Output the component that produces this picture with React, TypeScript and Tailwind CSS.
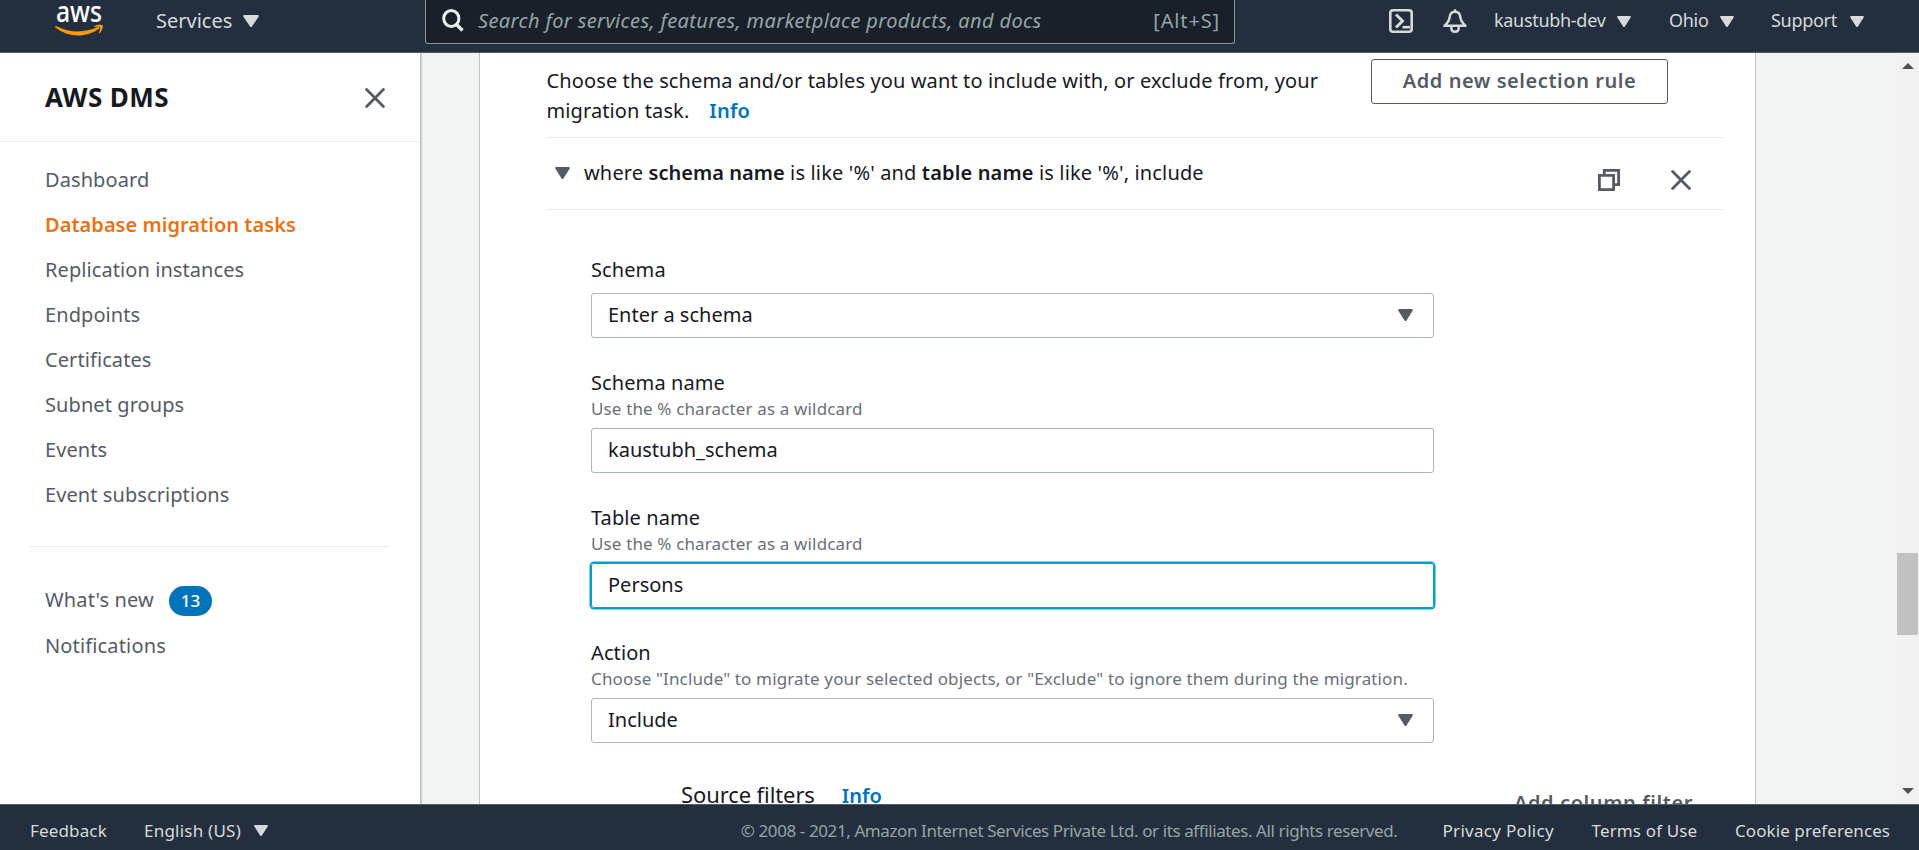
import type { ReactNode } from "react";

function Caret({ className }: { className: string }) {
  return (
    <svg viewBox="0 0 16 12" preserveAspectRatio="none" className={`block shrink-0 ${className}`} fill="currentColor">
      <path d="M1.400 0h13.200c1 0 1.500.9 1 1.700L9 11.400Q8 12.600 7 11.400L.4 1.700C-.1.900.4 0 1.400 0z" />
    </svg>
  );
}

function Cross({ className }: { className: string }) {
  return (
    <svg viewBox="0 0 20 20" className={`block shrink-0 ${className}`} fill="none" stroke="#545b64" strokeWidth="2.800" strokeLinecap="round">
      <path d="M1.600 1.600l16.800 16.800M18.400 1.600L1.600 18.400" />
    </svg>
  );
}

function Logo() {
  return (
    <svg viewBox="0 0 50 36" className="ml-[54px] block h-9 w-[50px] shrink-0 overflow-visible">
      <text x="2" y="21.500" textLength="46" lengthAdjust="spacingAndGlyphs" fill="#fff" fontFamily="Noto Sans, sans-serif" fontSize="28" fontWeight="500">
        aws
      </text>
      <path d="M1.200 31.200c.3-.5.8-.5 1.400-.2 13.400 7 27.600 6.800 41.200.9 1.400-.5 2.200.8 1 1.600C32.500 43 13.500 42.300 1.500 32.300c-.4-.4-.6-.8-.3-1.100z" transform="translate(0 -4.800)" fill="#f90" />
      <path d="M40.300 26.300c3-2.100 7-1.800 8.200-1.200 1 .8-.2 6-2.900 8.200-.6.400-.9.100-.7-.5.800-2 1.700-5 1.300-5.600-.6-.7-3.500-.4-5.400-.2-.7 0-.9-.400-.5-.7z" fill="#f90" />
    </svg>
  );
}

function TopBar() {
  return (
    <header className="flex h-[53px] shrink-0 items-start border-b border-[#545b64] bg-[#232f3e] text-[#d5dbdb]">
      <Logo />
      <button className="ml-[52px] flex h-[41px] items-center text-[20px] leading-[41px]">
        <span className="w-[87px] text-left">Services</span>
        <Caret className="h-3 w-4" />
      </button>
      <div className="ml-[166px] flex h-11 w-[810px] items-center rounded-b-[3px] border border-t-0 border-[#879596] bg-[#1a202a] pb-[2px] text-[20px] text-[#95a5a6]">
        <svg viewBox="0 0 22 23" className="ml-4 block h-[23px] w-[22px] text-[#eaeded]" fill="none" stroke="currentColor" strokeWidth="3">
          <ellipse cx="9.300" cy="9.500" rx="7.600" ry="8" />
          <path d="M14.500 15.500l6 6" strokeWidth="3.400" />
        </svg>
        <span className="ml-[14px] flex-1 whitespace-nowrap italic tracking-[0.370px]">
          Search for services, features, marketplace products, and docs
        </span>
        <span className="mr-[14px] tracking-[0.850px]">[Alt+S]</span>
      </div>
      <div className="flex h-[41px] flex-1 items-center text-[18px] whitespace-nowrap">
        <svg viewBox="0 0 24 24" className="ml-[154px] block size-6 shrink-0" fill="none" stroke="currentColor" strokeWidth="2.600">
          <rect x="1.300" y="1.300" width="21.400" height="21.400" rx="2.800" />
          <path d="M7 5.500l6.500 6.500L7 18.500" strokeWidth="3" />
          <path d="M13.500 18.200h7.500" />
        </svg>
        <svg viewBox="0 0 24 24" className="ml-[30px] block size-6 shrink-0" fill="none" stroke="currentColor" strokeWidth="2.400" strokeLinejoin="round">
          <path d="M12 .3v2.500" />
          <path d="M12 2.800c-3.600 0-5 2.600-5.300 5.200C6.300 11.500 5 13.800 1.400 16.800h21.200C19 13.800 17.700 11.500 17.300 8 17 5.400 15.600 2.800 12 2.800z" />
          <path d="M8.300 17.500v1.700c0 2.200 1.500 3.500 3.700 3.500s3.700-1.300 3.700-3.500v-1.700" />
        </svg>
        <button className="ml-[27px] flex items-center">
          <span className="w-[123px] text-left tracking-[-0.3px]">kaustubh-dev</span>
          <Caret className="mt-px h-[11px] w-[14px]" />
        </button>
        <button className="ml-[38px] flex items-center">
          <span className="w-[51px] text-left tracking-[-0.3px]">Ohio</span>
          <Caret className="mt-px h-[11px] w-[14px]" />
        </button>
        <button className="ml-[37px] flex items-center">
          <span className="w-[79px] text-left tracking-[-0.3px]">Support</span>
          <Caret className="mt-px h-[11px] w-[14px]" />
        </button>
      </div>
    </header>
  );
}

const links = [
  "Dashboard",
  "Database migration tasks",
  "Replication instances",
  "Endpoints",
  "Certificates",
  "Subnet groups",
  "Events",
  "Event subscriptions",
];

function Sidebar() {
  return (
    <aside className="z-10 w-[421px] shrink-0 border-r border-[#bfc5c8] bg-white shadow-[1px_0_1px_rgba(0,28,36,0.15)]">
      <div className="flex h-[89px] items-center justify-between border-b border-[#eaeded] pt-px pr-[35px] pl-[45px]">
        <h2 className="text-[26px] font-bold tracking-[0.4px] text-[#16191f]">AWS DMS</h2>
        <Cross className="size-5" />
      </div>
      <ul className="px-[45px] pt-[15px] text-[20px] leading-[45px] text-[#545b64]">
        {links.map((label) => (
          <li
            key={label}
            className={label === "Database migration tasks" ? "font-semibold tracking-[0.040px] text-[#ec7211]" : "tracking-[0.080px]"}
          >
            {label}
          </li>
        ))}
      </ul>
      <hr className="mx-[30px] mt-[29px] border-[#eaeded]" />
      <ul className="px-[45px] pt-[30px] text-[20px] leading-[45px] tracking-[0.150px] text-[#545b64]">
        <li className="flex h-[46px] items-center">
          <span className="mb-px w-[124px]">What's new</span>
          <span className="mt-px flex h-[30px] w-[43px] items-center justify-center rounded-full bg-[#0073bb] text-[17px] leading-none font-medium text-white">
            13
          </span>
        </li>
        <li>Notifications</li>
      </ul>
    </aside>
  );
}

function Field({ label, hint, children }: { label: string; hint?: string; children: ReactNode }) {
  return (
    <div className="mb-[30px] w-[843px]">
      <div className="h-[29px] text-[20px] leading-[29px] tracking-[0.100px]">{label}</div>
      {hint ? (
        <div className="mb-[7px] h-6 text-[17px] leading-6 tracking-[0.140px] whitespace-nowrap text-[#687078]">{hint}</div>
      ) : (
        <div className="h-[9px]" />
      )}
      {children}
    </div>
  );
}

function Box({ value, select, focused }: { value: string; select?: boolean; focused?: boolean }) {
  return (
    <div
      className={`flex h-[45px] items-center justify-between rounded-[3px] border pr-5 pb-px pl-[16px] text-[20px] ${
        focused ? "border-[#00a1c9] shadow-[0_0_0_1.500px_#00a1c9]" : "border-[#aab7b8]"
      }`}
    >
      <span>{value}</span>
      {select && <Caret className="h-3 w-[15px] text-[#545b64]" />}
    </div>
  );
}

function RuleCard() {
  return (
    <section className="ml-[58px] w-[1277px] shrink-0 overflow-hidden border-x border-[#bcc4c7] bg-white text-[#16191f]">
      <div className="ml-[66px] w-[1178px]">
        <div className="flex h-[85px] items-start border-b border-[#eaeded]">
          <p className="mt-[13px] w-[825px] pl-[0.500px] text-[20px] leading-[30px] whitespace-nowrap">
            <span className="tracking-[0.120px]">Choose the schema and/or tables you want to include with, or exclude from, your</span>
            <br />
            <span className="tracking-[0.100px]">migration task.</span>
            <a className="ml-5 font-semibold tracking-[0.200px] text-[#0073bb]">Info</a>
          </p>
          <button className="mt-[6px] flex h-[45px] w-[297px] items-center justify-center rounded-[3px] border border-[#545b64] pb-px text-[20px] font-semibold tracking-[0.550px] whitespace-nowrap text-[#545b64]">
            Add new selection rule
          </button>
        </div>
        <div className="flex h-[72px] items-center border-b border-[#eaeded]">
          <Caret className="mb-px ml-[9px] h-3 w-[15px] text-[#545b64]" />
          <p className="mb-[2px] ml-[14px] flex-1 text-[20px] tracking-[0.150px] whitespace-nowrap">
            where <b className="font-semibold tracking-[0.030px]">schema name</b> is like '%' and{" "}
            <b className="font-semibold tracking-[0.150px]">table name</b> is like '%', include
          </p>
          <svg viewBox="0 0 22 22" className="mt-[13px] block size-[22px]" fill="none" stroke="#545b64" strokeWidth="2.800">
            <path d="M1.400 6.400h14.200v14.200H1.400z" />
            <path d="M6.200 5V1.400h14.400v14.200H17" />
          </svg>
          <Cross className="mt-[13px] mr-[33px] ml-[51px] size-5" />
        </div>
        <div className="pt-[45px] pl-[45px]">
          <Field label="Schema">
            <Box value="Enter a schema" select />
          </Field>
          <Field label="Schema name" hint="Use the % character as a wildcard">
            <Box value="kaustubh_schema" />
          </Field>
          <Field label="Table name" hint="Use the % character as a wildcard">
            <Box value="Persons" focused />
          </Field>
          <Field
            label="Action"
            hint={'Choose "Include" to migrate your selected objects, or "Exclude" to ignore them during the migration.'}
          >
            <Box value="Include" select />
          </Field>
          <div className="flex items-start pl-[90px] whitespace-nowrap">
            <span className="mt-[6px] text-[22px] leading-[30px] tracking-[-0.100px]">Source filters</span>
            <a className="mt-[7px] ml-[27px] text-[20px] leading-[31px] font-semibold text-[#0073bb]">Info</a>
            <span className="mt-[15px] ml-auto mr-[31px] text-[20px] leading-[30px] font-semibold tracking-[0.600px] text-[#545b64]">
              Add column filter
            </span>
          </div>
        </div>
      </div>
    </section>
  );
}

function Scrollbar() {
  return (
    <div className="ml-auto flex w-[23px] shrink-0 flex-col items-center bg-[#f1f1f1]">
      <svg viewBox="0 0 12 6" className="mt-[10px] block h-[6px] w-3" fill="#505050">
        <path d="M0 6l6-6 6 6z" />
      </svg>
      <div className="mt-[484px] h-[82px] w-[21px] bg-[#c1c1c1]" />
      <svg viewBox="0 0 12 6" className="mt-auto mb-[10px] block h-[6px] w-3" fill="#505050">
        <path d="M0 0l6 6 6-6z" />
      </svg>
    </div>
  );
}

function Footer() {
  return (
    <footer className="flex h-[46px] shrink-0 items-center border-t border-[#545b64] bg-[#232f3e] pt-[6px] text-[17px] whitespace-nowrap text-[#d5dbdb]">
      <a className="ml-[30px] w-[114px] tracking-[0.150px]">Feedback</a>
      <button className="flex items-center">
        <span className="w-[110px] text-left tracking-[0.230px]">English (US)</span>
        <Caret className="h-[11px] w-[14px]" />
      </button>
      <span className="mr-[45px] ml-auto tracking-[-0.400px] text-[#95a5a6]">
        © 2008 - 2021, Amazon Internet Services Private Ltd. or its affiliates. All rights reserved.
      </span>
      <a className="w-[149px] tracking-[0.300px]">Privacy Policy</a>
      <a className="w-[143.500px] tracking-[0.150px]">Terms of Use</a>
      <a className="w-[184px] tracking-[0.080px]">Cookie preferences</a>
    </footer>
  );
}

export default function App() {
  return (
    <div className="flex h-[850px] w-[1919px] flex-col overflow-hidden bg-[#f2f3f3] font-['Noto_Sans',sans-serif]">
      <TopBar />
      <main className="flex min-h-0 flex-1 overflow-hidden">
        <Sidebar />
        <RuleCard />
        <Scrollbar />
      </main>
      <Footer />
    </div>
  );
}
